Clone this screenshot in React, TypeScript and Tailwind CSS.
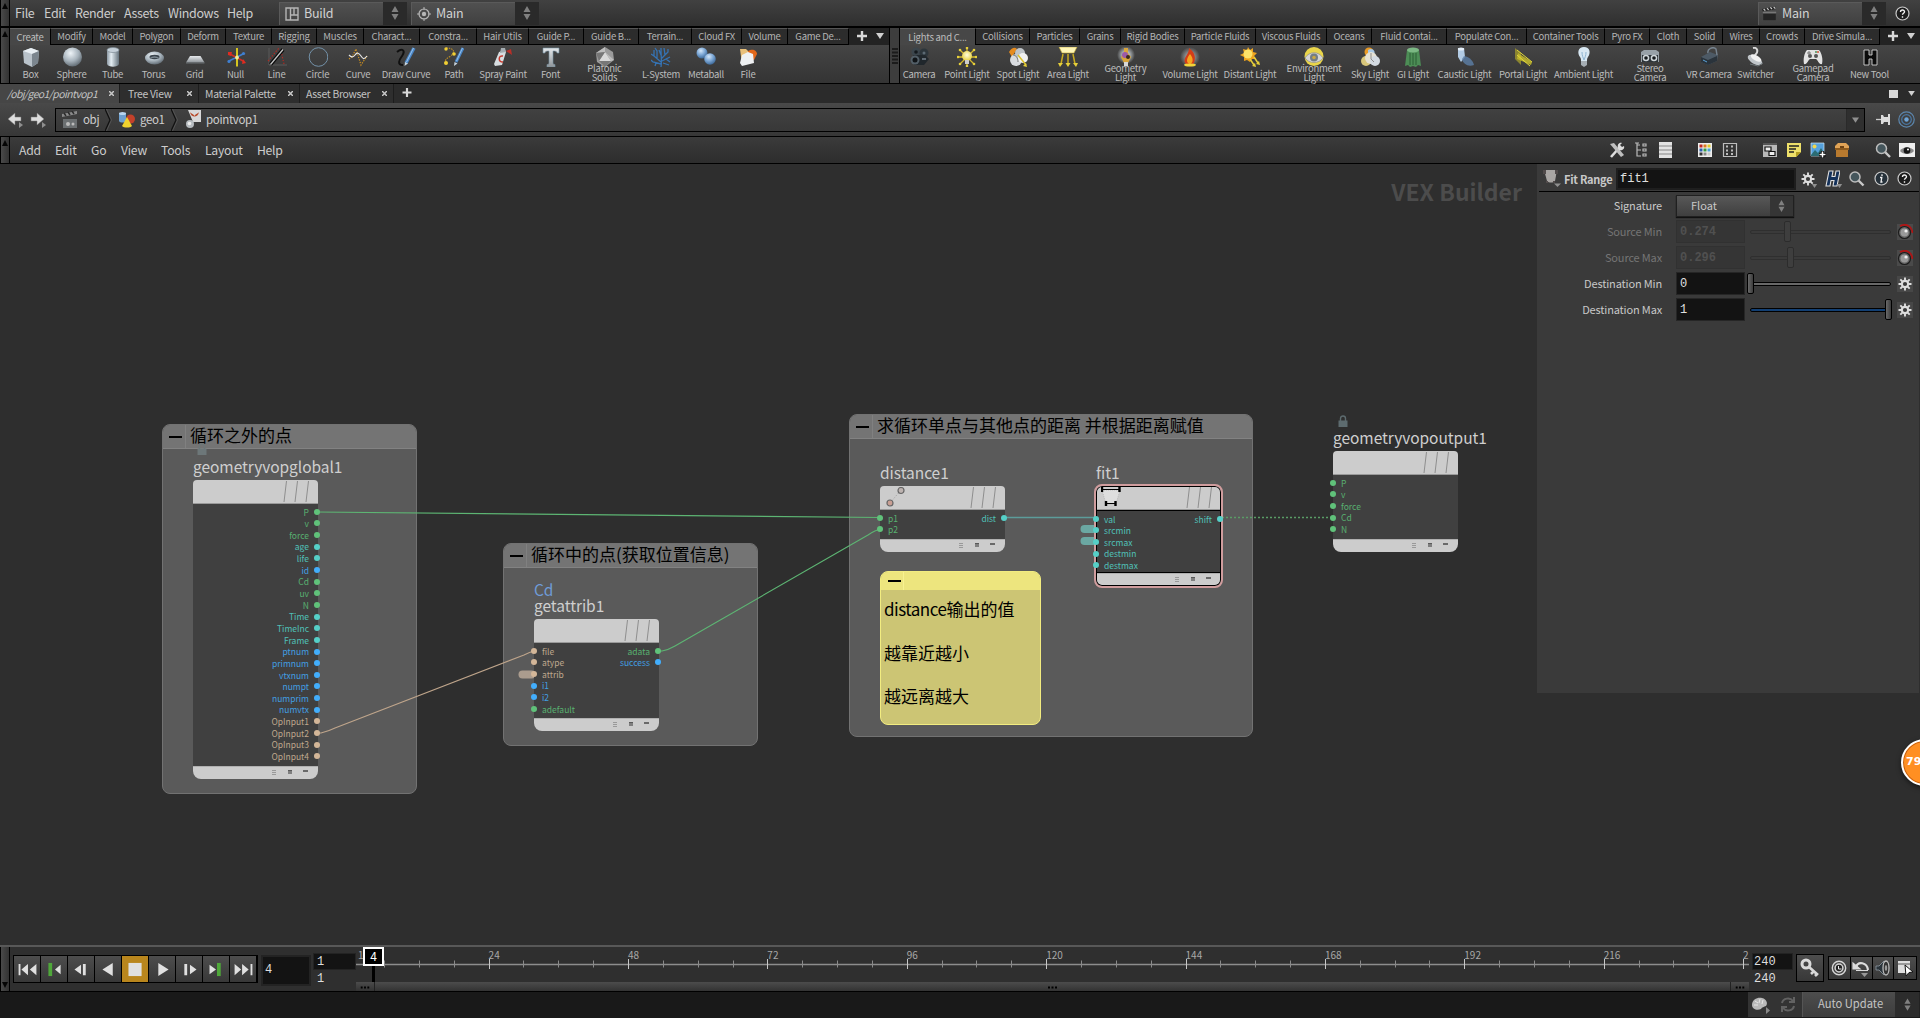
import React from "react";

/* ---------- shelf icons, 20 x 20 ---------- */
const Defs = () => (
  <svg className="absolute h-0 w-0" aria-hidden="true">
    <defs>
      <radialGradient id="ball" cx="0.4" cy="0.3" r="0.75"><stop offset="0" stopColor="#eef4f8" /><stop offset="0.55" stopColor="#a8b4bd" /><stop offset="1" stopColor="#59636b" /></radialGradient>
      <radialGradient id="blueBall" cx="0.4" cy="0.3" r="0.75"><stop offset="0" stopColor="#d5e8fa" /><stop offset="0.5" stopColor="#7ba6d4" /><stop offset="1" stopColor="#34608f" /></radialGradient>
      <linearGradient id="tube" x1="0" x2="1" y1="0" y2="0"><stop offset="0" stopColor="#8b98a3" /><stop offset="0.35" stopColor="#e4edf3" /><stop offset="1" stopColor="#65727c" /></linearGradient>
      <linearGradient id="steel" x1="0" x2="0" y1="0" y2="1"><stop offset="0" stopColor="#e6e9ec" /><stop offset="1" stopColor="#8e9499" /></linearGradient>
      <radialGradient id="glow" cx="0.5" cy="0.4" r="0.6"><stop offset="0" stopColor="#fffde0" /><stop offset="1" stopColor="#e6cf3a" /></radialGradient>
      <radialGradient id="halo" cx="0.5" cy="0.5" r="0.5"><stop offset="0.4" stopColor="#b9c0c4" stopOpacity="0.9" /><stop offset="1" stopColor="#b9c0c4" stopOpacity="0" /></radialGradient>
    </defs>
  </svg>
);

const art: Record<string, React.ReactNode> = {
  box: <><path d="M2 4 10 1l8 3-1 12-6 4-8-4z" fill="#b9c2ca" /><path d="M2 4 10 1l8 3-7 3z" fill="#e8eef3" /><path d="m11 7 7-3-1 12-6 4z" fill="#7b858e" /></>,
  sphere: <circle cx="10.5" cy="10" r="9.5" fill="url(#ball)" />,
  tube: <><path d="M4 3v14c1 3.500 11 3.500 12 0V3z" fill="url(#tube)" /><ellipse cx="10" cy="3" rx="6" ry="2.500" fill="#c5d0d9" stroke="#7e8b95" strokeWidth="0.700" /></>,
  torus: <><ellipse cx="10.500" cy="11" rx="9.500" ry="6.500" fill="url(#ball)" /><ellipse cx="10.500" cy="10" rx="5" ry="2.200" fill="#3b444c" /><path d="M6 11.500c3-2 6-2 9 0" stroke="#7d8992" fill="none" strokeWidth="1.500" /></>,
  grid: <><path d="M5 9h10.500L19.500 15.500H1z" fill="url(#steel)" /><path d="M1 15.500h18.500v1H1z" fill="#6b7074" /></>,
  nul: <><path d="m2 14.500 16-8" stroke="#3f7fd0" strokeWidth="1.600" /><path d="m3 6.500 15 8" stroke="#cf2f24" strokeWidth="1.600" /><path d="M11 1v18.500" stroke="#d6c51f" strokeWidth="2" /><path d="M2 5h4l-1 4-3-1zM17 12l3 4-4 1z" fill="#e02b20" /><circle cx="17.500" cy="6.500" r="1.600" fill="#3f7fd0" /><circle cx="3" cy="14.500" r="1.600" fill="#3f7fd0" /><circle cx="11" cy="10.500" r="1.900" fill="#f3ee9a" /></>,
  line: <><path d="M2 1v17h18" stroke="#5a5a5a" fill="none" strokeWidth="1" /><path d="M1 14 12 1M14 4l3 13" stroke="#b02b22" strokeWidth="1.200" strokeDasharray="1.500 1.500" /><path d="M3.500 17.500 16 2.500" stroke="#090909" strokeWidth="3.800" /><path d="M3.500 17.500 16 2.500" stroke="#c4c4c4" strokeWidth="1.300" /></>,
  circle: <circle cx="10.500" cy="10" r="9.300" fill="none" stroke="#7391a8" strokeWidth="1" />,
  curve: <><path d="m1 12 3-2 4-8 5 16 6-9" stroke="#d1921e" fill="none" strokeWidth="1.200" strokeDasharray="1.300 1.300" /><path d="M1 8c2 2 4 3 6 0s4-2 6 1 3 4 6 0" stroke="#e5e5e5" fill="none" strokeWidth="1.200" /></>,
  draw: <><path d="M1 5c5-4 9-2 5 4-3 4-5 9 1 9" stroke="#101010" fill="none" strokeWidth="2" /><path d="m18 1-8 15" stroke="#4a86c6" strokeWidth="3.400" /><path d="m17.500 1-7 14" stroke="#9cc5ee" strokeWidth="1" /><path d="m8.500 19 .5-4 3 1.500z" fill="#c7d4de" /></>,
  path: <><path d="M2 1c9 0 10 5 3 9-4 2-4 5-3 6" stroke="#bd8f25" fill="none" strokeDasharray="1.500 1" strokeWidth="1.200" /><circle cx="2" cy="2" r="1.700" fill="#f1cf33" /><circle cx="10" cy="7" r="1.800" fill="#f1cf33" /><circle cx="2" cy="16" r="2" fill="#f1cf33" /><path d="m19 1-7 14" stroke="#4a86c6" strokeWidth="3" /><path d="m18.500 1-6 13" stroke="#9cc5ee" strokeWidth="0.900" /><path d="m10 19 .5-4 3 1.500z" fill="#c7d4de" /></>,
  spray: <><path d="m6 5 6-2 1 2-4 13-7 1-1-2z" fill="#d7dde0" /><path d="m8 1 4 0 1 4-6 1z" fill="#a4acb1" /><path d="M13 4l5-2 1 6z" fill="#cf2b23" opacity="0.850" /><path d="M10 9c-5-1-5 6 0 6" stroke="#c8392e" fill="none" strokeWidth="1.500" /></>,
  font: <path d="M2 1h16v5h-2c0-1.500-1-2-4-2v12c0 1 1 1.500 2 1.500V20H6v-2.500c1 0 2-.5 2-1.500V4c-3 0-4 .5-4 2H2z" fill="url(#steel)" stroke="#7794a6" strokeWidth="0.600" />,
  platonic: <><path d="m10 0 8 5 1 8-9 7-8-5-1-9z" fill="#9b9b9b" /><path d="m10 5-6 9 12 0z" fill="#d9d9d9" /><path d="m10 0 0 5-9 1zM19 13l-3 1-6-9z" fill="#bdbdbd" /><path d="M4 14 1 6l9-1zM16 14l-6 6-6-6z" fill="#777" /></>,
  lsys: <g stroke="#3573b4" fill="none" strokeWidth="1.300"><path d="M10 20c1-6 0-8 0-19M10 15 3 9V3M10 12l7-7V2M3 9 0 7M6 11 6 4 4 1M14 8 13 1M11 14l8-4M10 17l-8-2-2-2M12 16l6 2M15 12l4 3M10 8 8 3M5 16l-1 3" /></g>,
  meta: <><circle cx="6" cy="6" r="5.500" fill="url(#blueBall)" /><circle cx="14" cy="12" r="5.800" fill="url(#blueBall)" /></>,
  file: <><path d="m2 2 6 0 2 2 6 0v6L4 17z" fill="#e9c07a" /><path d="M10 4c5-3 9 0 9 3l-3 6-5-2z" fill="#e2671a" /><path d="m4 8 6-3 5 2 1 9-12 3-2-3z" fill="#eef0f2" /></>,
  camera: <><circle cx="7" cy="5" r="4.500" fill="#3b454c" /><circle cx="15" cy="6" r="4.500" fill="#2c353b" /><path d="M4 8h12l4 4-5 6H5z" fill="#20272c" /><circle cx="6" cy="13" r="4.500" fill="#525e67" /><circle cx="6" cy="13" r="2.500" fill="#101417" /><circle cx="7" cy="5" r="1.800" fill="#14191d" /><circle cx="15" cy="6" r="1.500" fill="#5c6a74" /><path d="M13 12h4" stroke="#77858f" strokeWidth="1.500" /></>,
  point: <><g stroke="#d5b92c" strokeWidth="1.300"><path d="M10 0v20M0 10h20M3 3l14 14M17 3 3 17" /></g><g fill="#e6cf3a"><circle cx="10" cy="1" r="1.300" /><circle cx="10" cy="19" r="1.300" /><circle cx="1" cy="10" r="1.300" /><circle cx="19" cy="10" r="1.300" /><circle cx="3" cy="3" r="1.300" /><circle cx="17" cy="3" r="1.300" /><circle cx="3" cy="17" r="1.300" /><circle cx="17" cy="17" r="1.300" /></g><circle cx="10" cy="9" r="5" fill="url(#glow)" /><path d="M8 13h4v4H8z" fill="#ccc" /></>,
  spot: <><path d="M1 5c3-5 6-5 8-3L4 10z" fill="#e68b1e" /><circle cx="8" cy="13" r="6" fill="#d9dcdf" /><circle cx="12" cy="6" r="5" fill="#bfc4c8" /><circle cx="15" cy="11" r="5" fill="#f0f0f0" /><path d="M5 8c3 0 5 3 5 7" stroke="#777" fill="none" /><path d="m10 8 8 10" stroke="#d9bf2b" strokeWidth="1.500" /><path d="m19 20-4-1 3-3z" fill="#e6cf3a" /></>,
  area: <><path d="M1 0h18l-3 6H4z" fill="#fff6b8" stroke="#c4a72d" strokeWidth="0.600" /><path d="M5 7 3 17M10 7v11M15 7l2 10" stroke="#c9ab1f" strokeWidth="1.500" /><path d="m0 16 5 0-3 4zM7.500 16h5L10 20zM15 16h5l-2 4z" fill="#e6cf3a" /></>,
  geo: <><circle cx="10" cy="8" r="9" fill="url(#halo)" /><path d="M8 1h4v5l3 4-3 6H8l-3-6 3-4z" fill="#d9a53b" /><circle cx="9" cy="8" r="3" fill="#9c5aa8" /><circle cx="12" cy="10" r="2" fill="#3a2a1c" /><path d="M8 15h4v4H8z" fill="#d8d8d8" /></>,
  fire: <><circle cx="10" cy="10" r="10" fill="url(#halo)" opacity="0.700" /><path d="M9 1c6 5 7 9 5 15-2 2-7 2-9 0-2-6 4-8 4-15z" fill="#d43d18" /><path d="M10 7c4 5 3 9 0 10-4-1-4-5 0-10z" fill="#f7a51f" /><ellipse cx="10" cy="18" rx="6" ry="1.600" fill="#f1d43a" /></>,
  distant: <><path d="m8 0 2 3 3-2 0 4 4 1-3 3 2 3-4 0-2 3-3-2-3 1 0-4-4-2 4-2-1-4 4 1z" fill="#eda41e" /><circle cx="8" cy="7" r="4.500" fill="#fce36a" /><path d="m10 12 4 6M14 10l4 6" stroke="#e6cf3a" strokeWidth="1.500" /><path d="m16 20-4-1 3-3zM20 18l-4-1 3-3z" fill="#e6cf3a" /></>,
  env: <><circle cx="10" cy="9.500" r="9.500" fill="#e9d54a" /><path d="M1 11c4-7 14-7 18 0-4 6-14 6-18 0z" fill="#d5d5d5" stroke="#8c8c8c" strokeWidth="0.700" /><circle cx="10" cy="10.500" r="4" fill="#737d86" /><circle cx="10" cy="10.500" r="1.800" fill="#c9a845" /></>,
  sky: <><circle cx="9" cy="5" r="4.500" fill="#e99a25" /><path d="M8 3c5-3 8 2 6 5l-6 1z" fill="#a8c8e5" /><circle cx="6" cy="14" r="5" fill="#d9c77b" /><circle cx="11" cy="11" r="6" fill="#e6e2d4" /><circle cx="15" cy="14" r="5" fill="#d4dbe2" /><path d="m11 6 0 6 3 3" stroke="#8d8d8d" fill="none" /></>,
  gi: <><path d="M4 3h12l2 16-3-1-2 2-3-1-3 1-2-2-3 1z" fill="#4d8d56" /><ellipse cx="10" cy="3" rx="6" ry="2.500" fill="#7cb884" /><path d="M7 6v12M10 6v12M13 6v12" stroke="#2c5e35" strokeWidth="1" /></>,
  caustic: <><path d="M3 1h6l1 9-4 5-3-5z" fill="#b2cbe4" /><ellipse cx="6" cy="2" rx="3.200" ry="1.500" fill="#e6f0fa" /><path d="M9 9c6 1 9 5 10 9-6 2-11-1-12-6z" fill="#5c7fa8" opacity="0.800" /></>,
  portal: <><path d="m2 1 6 5 0 12-6-6z" fill="#8b8530" /><path d="m5 6 14 9-1 3L4 12z" fill="#c5bb2b" opacity="0.850" /><path d="m4 3 15 12M4 8l13 11" stroke="#e3d93b" strokeWidth="1" /></>,
  bulb: <><path d="M10 0c6 0 7 6 4 10-1 1-1 3-1 4H7c0-1 0-3-1-4C3 6 4 0 10 0z" fill="#d7e7f2" /><path d="M7 14h6v4l-3 2-3-2z" fill="#a6aeb4" /><path d="M8 5c0 4 1 5 2 8 1-3 2-4 2-8" stroke="#8eb4d1" fill="none" /></>,
  stereo: <><path d="M1 5 4 3h12l3 2v10H1z" fill="#98a1a8" /><path d="M2 8h16v7H2z" fill="#2c3338" /><circle cx="6" cy="11" r="3.300" fill="#cfd6da" /><circle cx="6" cy="11" r="1.800" fill="#15191c" /><circle cx="14" cy="11" r="3.300" fill="#cfd6da" /><circle cx="14" cy="11" r="1.800" fill="#15191c" /></>,
  vr: <><path d="m2 10 9-5 8 3-1 6-9 4-7-3z" fill="#4d5a66" /><path d="m2 10 7 3 9-4v5l-9 4-7-3z" fill="#2a333b" /><path d="M9 6c-1-4 5-7 8-4l1 6" stroke="#76838f" fill="none" strokeWidth="1.500" /><path d="m4 13 4 2" stroke="#5ba3d9" /></>,
  switcher: <><path d="M7 1c5-1 5 4 3 6L6 12" stroke="#d9d9d9" fill="none" strokeWidth="2" /><ellipse cx="9" cy="13" rx="8" ry="4" fill="#bfc4c8" transform="rotate(30 9 13)" /><ellipse cx="10" cy="11" rx="6" ry="2.500" fill="#f1f1f1" transform="rotate(30 10 11)" /><path d="m4 17 8 2 5-3" stroke="#6d7478" fill="none" /></>,
  gamepad: <><path d="M4 3h12c3 3 4 10 3 14-3 1-4-4-6-5H7c-2 1-3 6-6 5C0 13 1 6 4 3z" fill="#e2e2e2" /><circle cx="7" cy="9" r="2" fill="#555" /><circle cx="13" cy="9" r="2" fill="#555" /><circle cx="15" cy="5" r="1" fill="#d2543a" /><circle cx="13" cy="5" r="0.900" fill="#3c8c4d" /><path d="M4 6h4M6 4v4" stroke="#777" /></>,
  newtool: <path d="M4 3h5v5h3V3h5v15h-5v-6H9v6H4z" fill="#0b0b0b" stroke="#d0d0d0" strokeWidth="0.900" />,
};

const Art = ({ n }: { n: string }) => (
  <svg className="h-5 w-5 shrink-0" viewBox="0 0 20 20">{art[n]}</svg>
);

/* ---------- small shared pieces ---------- */
const UpDown = ({ className = "" }: { className?: string }) => (
  <svg className={"h-[14px] w-[8px] shrink-0 " + className} viewBox="0 0 8 14"><path d="M4 0 7.500 6h-7zM4 14 .5 8h7z" fill="#808080" /></svg>
);
const Down = ({ className = "" }: { className?: string }) => (
  <svg className={"h-[6px] w-[8px] shrink-0 " + className} viewBox="0 0 8 6"><path d="M0 0h8L4 6z" fill="currentColor" /></svg>
);
const Plus = ({ className = "" }: { className?: string }) => (
  <svg className={"h-[10px] w-[10px] shrink-0 " + className} viewBox="0 0 10 10"><path d="M5 0v10M0 5h10" stroke="#d8d8d8" strokeWidth="2.400" /></svg>
);
const Grip = ({ up = true, className = "" }: { up?: boolean; className?: string }) => (
  <div className={"flex w-[10px] shrink-0 justify-center border-r border-l border-black bg-linear-to-r from-[#4a4a4a] to-[#333] " + (up ? "items-start pt-[3px] " : "items-end pb-[3px] ") + className}>
    <svg className="h-[6px] w-[6px]" viewBox="0 0 6 6"><path d={up ? "M3 0 6 6H0z" : "M3 6 0 0h6z"} fill="#050505" /></svg>
  </div>
);
const Help = () => (
  <svg className="h-[15px] w-[15px] shrink-0" viewBox="0 0 15 15"><circle cx="7.500" cy="7.500" r="6.500" fill="#1c1c1c" stroke="#c9c9c9" strokeWidth="1.200" /><path d="M5.500 6c0-2.600 4-2.600 4-.2 0 1.500-2 1.500-2 3M7.500 10.200v1.500" stroke="#f2f2f2" strokeWidth="1.400" fill="none" /></svg>
);
const Info = () => (
  <svg className="h-[15px] w-[15px] shrink-0" viewBox="0 0 15 15"><circle cx="7.500" cy="7.500" r="6.500" fill="#26313a" stroke="#c9c9c9" strokeWidth="1.200" /><path d="M6 6.500h1.800L7 11h1.500M8 3.300v1.600" stroke="#f2f2f2" strokeWidth="1.300" fill="none" /></svg>
);
const Search = () => (
  <svg className="h-[17px] w-[17px] shrink-0" viewBox="0 0 17 17"><path d="m10 10 5.500 5.500" stroke="#c9c9c9" strokeWidth="2.400" /><circle cx="7" cy="7" r="5" fill="#45565c" stroke="#bcbcbc" strokeWidth="1.500" /></svg>
);
const Gear = ({ className = "h-[16px] w-[16px]" }: { className?: string }) => (
  <svg className={"shrink-0 " + className} viewBox="0 0 16 16"><g stroke="#dedede" strokeWidth="1.900"><path d="M8 1.500v13M1.500 8h13M3.300 3.300l9.400 9.400M12.700 3.300l-9.400 9.400" /></g><circle cx="8" cy="8" r="4.200" fill="#dedede" /><circle cx="8" cy="8" r="2.100" fill="#3a3a3a" /></svg>
);
const Clapper = ({ className }: { className: string }) => (
  <svg className={"shrink-0 " + className} viewBox="0 0 18 18"><path d="M1 8h16v9H1z" fill="#242424" stroke="#555" strokeWidth="0.600" /><path d="m0 3 16-3 .6 3L1 6z" fill="#222" /><path d="m2 3 2 2M6 2l2 2M10 1l2 2M14 .5l2 2" stroke="#ccc" strokeWidth="1.500" /><path d="M1 6.200h16v2H1z" fill="#777" /></svg>
);

/* ---------- top menu ---------- */
const Picker = ({ icon, label, widths }: { icon: React.ReactNode; label: string; widths: string }) => (
  <div className="flex h-[23px]">
    <div className={"flex items-center border-t border-l border-[#5a5a5a] bg-linear-to-b from-[#505050] to-[#404040] text-[#d2d2d2] " + widths}>
      {icon}<span className="ml-[5px] text-[12.500px] tracking-[-0.250px]">{label}</span>
    </div>
    <div className="flex w-6 items-center justify-center bg-[#2a2a2a]"><UpDown /></div>
  </div>
);

const menus = [["File", "w-[29px]"], ["Edit", "w-[31px]"], ["Render", "w-[49px]"], ["Assets", "w-[44px]"], ["Windows", "w-[59px]"], ["Help", "w-[52px]"]];

const TopBar = () => (
  <div className="flex h-[27px] border-b border-black bg-linear-to-b from-[#414141] to-[#2f2f2f]">
    <Grip />
    <div className="flex items-center pl-[5px] text-[12.500px] tracking-[-0.350px] text-[#cdcdcd]">
      {menus.map(([m, w]) => <span key={m} className={w}>{m}</span>)}
    </div>
    <div className="flex items-center gap-1">
      <Picker label="Build" widths="w-[104px] pl-[5px]" icon={<svg className="h-[14px] w-[14px]" viewBox="0 0 14 14"><path d="M1 1h12v12H1zM5.500 1v12M5.500 8H13M9 8V1" stroke="#b5b5b5" strokeWidth="1.400" fill="none" /></svg>} />
      <Picker label="Main" widths="w-[104px] pl-[5px]" icon={<svg className="h-[14px] w-[14px]" viewBox="0 0 14 14"><circle cx="7" cy="7" r="5" stroke="#b5b5b5" strokeWidth="1.200" fill="none" /><circle cx="7" cy="7" r="2.200" fill="#b5b5b5" /><path d="M7 0v3M7 11v3M0 7h3M11 7h3" stroke="#b5b5b5" /></svg>} />
    </div>
    <div className="ml-auto flex items-center">
      <Picker label="Main" widths="w-[104px] pl-[3px]" icon={<Clapper className="h-[16px] w-[15px]" />} />
      <div className="ml-[9px] mr-[10px]"><Help /></div>
    </div>
  </div>
);

/* ---------- shelves ---------- */
type Pair = [string, string];
const leftTabs: Pair[] = [["Create", "w-[41px]"], ["Modify", "w-[42px]"], ["Model", "w-[40px]"], ["Polygon", "w-[48px]"], ["Deform", "w-[45px]"], ["Texture", "w-[46px]"], ["Rigging", "w-[45px]"], ["Muscles", "w-[47px]"], ["Charact...", "w-[56px]"], ["Constra...", "w-[57px]"], ["Hair Utils", "w-[52px]"], ["Guide P...", "w-[55px]"], ["Guide B...", "w-[55px]"], ["Terrain...", "w-[53px]"], ["Cloud FX", "w-[50px]"], ["Volume", "w-[46px]"], ["Game De...", "w-[61px]"]];
const rightTabs: Pair[] = [["Lights and C...", "w-[76px]"], ["Collisions", "w-[54px]"], ["Particles", "w-[50px]"], ["Grains", "w-[41px]"], ["Rigid Bodies", "w-[64px]"], ["Particle Fluids", "w-[71px]"], ["Viscous Fluids", "w-[71px]"], ["Oceans", "w-[45px]"], ["Fluid Contai...", "w-[75px]"], ["Populate Con...", "w-[80px]"], ["Container Tools", "w-[78px]"], ["Pyro FX", "w-[45px]"], ["Cloth", "w-[37px]"], ["Solid", "w-[36px]"], ["Wires", "w-[37px]"], ["Crowds", "w-[45px]"], ["Drive Simula...", "w-[75px]"]];
type Tool = [string, string, string];
const leftTools: Tool[] = [["Box", "box", "w-[41px]"], ["Sphere", "sphere", "w-[41px]"], ["Tube", "tube", "w-[41px]"], ["Torus", "torus", "w-[41px]"], ["Grid", "grid", "w-[41px]"], ["Null", "nul", "w-[41px]"], ["Line", "line", "w-[41px]"], ["Circle", "circle", "w-[41px]"], ["Curve", "curve", "w-[40px]"], ["Draw Curve", "draw", "w-[56px]"], ["Path", "path", "w-[40px]"], ["Spray Paint", "spray", "w-[58px]"], ["Font", "font", "w-[37px]"], ["Platonic\nSolids", "platonic", "w-[71px]"], ["L-System", "lsys", "w-[42px]"], ["Metaball", "meta", "w-[48px]"], ["File", "file", "w-[36px]"]];
const rightTools: Tool[] = [["Camera", "camera", "w-[38px]"], ["Point Light", "point", "w-[58px]"], ["Spot Light", "spot", "w-[44px]"], ["Area Light", "area", "w-[56px]"], ["Geometry\nLight", "geo", "w-[59px]"], ["Volume Light", "fire", "w-[70px]"], ["Distant Light", "distant", "w-[50px]"], ["Environment\nLight", "env", "w-[78px]"], ["Sky Light", "sky", "w-[34px]"], ["GI Light", "gi", "w-[52px]"], ["Caustic Light", "caustic", "w-[51px]"], ["Portal Light", "portal", "w-[66px]"], ["Ambient Light", "bulb", "w-[55px]"], ["Stereo\nCamera", "stereo", "w-[78px]"], ["VR Camera", "vr", "w-[40px]"], ["Switcher", "switcher", "w-[53px]"], ["Gamepad\nCamera", "gamepad", "w-[62px]"], ["New Tool", "newtool", "w-[51px]"]];

const Shelf = ({ tabs, tools, className }: { tabs: Pair[]; tools: Tool[]; className: string }) => (
  <div className={"flex flex-col " + className}>
    <div className="flex h-[17px] bg-[#232323]">
      {tabs.map(([t, w], i) => (
        <div key={t} className={"flex items-center justify-center overflow-hidden border-t border-r border-r-black text-[9.500px] tracking-[-0.250px] whitespace-nowrap " + w + (i === 0 ? " border-t-[#606060] bg-[#474747] text-[#bdbdbd]" : " border-b border-b-black border-t-[#555] bg-[#2c2c2c] text-[#b4b4b4]")}>{t}</div>
      ))}
      <Plus className="mt-[3px] ml-[8px]" />
      <Down className="mt-[5px] ml-[9px] text-[#d0d0d0]" />
    </div>
    <div className="flex h-[38px] bg-linear-to-b from-[#454545] to-[#343434]">
      {tools.map(([t, icon, w]) => (
        <div key={t} className={"flex flex-col items-center pt-[2px] " + w}>
          <Art n={icon} />
          <span className={"text-center text-[9.500px] tracking-[-0.250px] whitespace-pre text-[#bcbcbc] " + (t.includes("\n") ? "-mt-[3px] leading-[9px]" : "mt-[1px] leading-[13px]")}>{t}</span>
        </div>
      ))}
    </div>
  </div>
);

const Shelves = () => (
  <div className="flex h-[57px] border-t border-b border-black bg-[#333]">
    <Grip />
    <Shelf tabs={leftTabs} tools={leftTools} className="w-[879px]" />
    <div className="grid w-[11px] place-items-center border-r border-l border-black bg-[#3d3d3d]">
      <svg className="h-[16px] w-[6px]" viewBox="0 0 6 16"><path d="M1 0v16M5 0v16M3 0v16" stroke="#0a0a0a" strokeDasharray="2 1.500" strokeWidth="1.300" /></svg>
    </div>
    <Shelf tabs={rightTabs} tools={rightTools} className="grow" />
  </div>
);

/* ---------- pane tabs and path ---------- */
const paneTabs: Pair[] = [["/obj/geo1/pointvop1", "w-[120px] pl-[7px] pr-[5px] bg-[#464646] italic tracking-[-0.550px]"], ["Tree View", "w-[79px] pl-[8px] pr-[6px] bg-[#2e2e2e] tracking-[-0.300px]"], ["Material Palette", "w-[101px] pl-[6px] pr-[6px] bg-[#2e2e2e] tracking-[-0.300px]"], ["Asset Browser", "w-[94px] pl-[6px] pr-[6px] bg-[#2e2e2e] tracking-[-0.300px]"]];

const PaneTabs = () => (
  <div className="flex h-[19px] items-stretch bg-[#2b2b2b]">
    {paneTabs.map(([t, c]) => (
      <div key={t} className={"flex items-center justify-between border-r border-[#1d1d1d] text-[10.400px] whitespace-nowrap text-[#c3c3c3] " + c}>
        <span>{t}</span>
        <svg className="h-[5px] w-[5px]" viewBox="0 0 5 5"><path d="m0 0 5 5M5 0 0 5" stroke="#c8c8c8" strokeWidth="1.500" /></svg>
      </div>
    ))}
    <Plus className="mt-[4px] ml-[8px] !h-[9px]" />
    <div className="mr-[5px] ml-auto flex items-center gap-[10px]">
      <span className="h-[8px] w-[9px] bg-[#dadada]" />
      <Down className="!h-[5px] !w-[7px] text-[#d0d0d0]" />
    </div>
  </div>
);

const NavArrow = ({ flip = false }: { flip?: boolean }) => (
  <svg className="h-[18px] w-[17px] shrink-0" viewBox="0 0 17 18"><path transform={flip ? "translate(15 0) scale(-1 1)" : undefined} d="m1 8 7-6v4h6v4H8v4z" fill="#dcdcdc" stroke="#777" strokeWidth="0.500" /><path d="m12 11 4 3-4 3z" fill="#8f8f8f" /></svg>
);
const Chevron = () => (
  <svg className="h-[22px] w-[7px] shrink-0" viewBox="0 0 7 22"><path d="M0 0 5 11 0 22" fill="none" stroke="#111" strokeWidth="1.200" /><path d="M1.500 0 6.500 11l-5 11" fill="none" stroke="#565656" strokeWidth="0.900" /></svg>
);

const PathBar = () => (
  <div className="flex h-[33px] items-center bg-linear-to-b from-[#494949] to-[#373737]">
    <div className="ml-[7px] flex w-[48px] gap-[6px]"><NavArrow /><NavArrow flip /></div>
    <div className="flex h-[24px] w-[1810px] items-center border border-black bg-linear-to-b from-[#414141] to-[#383838] text-[11.500px] tracking-[-0.350px] text-[#cfcfcf]">
      <svg className="ml-[5px] h-[17px] w-[17px]" viewBox="0 0 17 17"><path d="m1 3 15-3v3L1 6z" fill="#8a8a8a" /><path d="m3 2 2 3M7 1l2 3M11 0l2 3" stroke="#2c2c2c" strokeWidth="1.500" /><path d="M2 8h14v9H2z" fill="#6b6f71" /><circle cx="7" cy="13" r="2" fill="#bbb" /><circle cx="12" cy="13" r="1.500" fill="#bbb" /></svg>
      <span className="ml-[5px] w-[22px]">obj</span><Chevron />
      <svg className="ml-[6px] h-[17px] w-[17px]" viewBox="0 0 17 17"><path d="M1 2v8c1 2 6 2 7 0V2z" fill="#6ea0cf" /><ellipse cx="4.500" cy="2.500" rx="3.500" ry="1.500" fill="#b9d5ef" /><circle cx="12.500" cy="8" r="4.500" fill="#c3412a" /><path d="m9 6 5 9c-2 2-8 2-10 0z" fill="#f0d22e" /></svg>
      <span className="ml-[5px] w-[31px]">geo1</span><Chevron />
      <svg className="ml-[7px] h-[19px] w-[16px]" viewBox="0 0 16 19"><path d="M3 0h13v12H8z" fill="#d8d8d8" /><path d="M5 2c1 6 8 6 9 0-1 2-3 1-4.500 4C8 3 6 4 5 2z" fill="#b84a2a" /><circle cx="5" cy="14" r="4" fill="#b7bcc0" /><circle cx="4.500" cy="13.500" r="1.800" fill="#eee" /></svg>
      <span className="ml-[5px]">pointvop1</span>
      <div className="ml-auto grid h-full w-[18px] place-items-center border-l border-[#2a2a2a] bg-[#2f2f2f]"><Down className="!h-[6px] !w-[7px] text-[#909090]" /></div>
    </div>
    <svg className="ml-[11px] h-[13px] w-[15px]" viewBox="0 0 15 13"><path d="M0 6.500h5" stroke="#ccc" strokeWidth="1.300" /><path d="M5 2h2l1 2h4V1h2v11h-2V9H8l-1 2H5z" fill="#dcdcdc" /></svg>
    <svg className="ml-[7px] h-[17px] w-[17px]" viewBox="0 0 17 17"><circle cx="8.500" cy="8.500" r="7.700" fill="none" stroke="#5c86ad" strokeWidth="1.200" /><circle cx="8.500" cy="8.500" r="4.800" fill="none" stroke="#4a78a5" strokeWidth="1.200" /><circle cx="8.500" cy="8.500" r="2.200" fill="#6fa5d8" /></svg>
  </div>
);

/* ---------- network menu ---------- */
const netMenu: Pair[] = [["Add", "w-[36px]"], ["Edit", "w-[36px]"], ["Go", "w-[30px]"], ["View", "w-[40px]"], ["Tools", "w-[44px]"], ["Layout", "w-[52px]"], ["Help", "w-[40px]"]];
const netIcons: [string, React.ReactNode][] = [
  ["mr-[8px]", <><path d="m2 15 8-9" stroke="#ddd" strokeWidth="2.600" /><path d="M1 2l4-1 10 12-3 2z" fill="#bfbfbf" /><path d="M9 6c-1-3 1-6 4-5l-2 2 2 2 2-1c1 3-2 5-5 4z" fill="#ddd" /></>],
  ["mr-[8px]", <path d="M4 1v13h4M4 3h3M4 8h4M10 2h3v2h-3zM10 7h3v2h-3zM10 12h3v2h-3zM2 1h4" stroke="#bbb" strokeWidth="1.200" fill="none" />],
  ["mr-[24px]", <><path d="M2 0h13v16H2z" fill="#e2e2e2" /><path d="M2 4h13M2 8h13M2 12h13" stroke="#a5a5a5" strokeWidth="1.500" /></>],
  ["mr-[9px]", <><path d="M1 1h14v14H1z" fill="#efefef" /><path d="M2.500 2.500h3v3h-3z" fill="#c02a22" /><path d="M6.500 2.500h3v3h-3z" fill="#dd7a1d" /><path d="M10.500 2.500h3v3h-3z" fill="#e1c92a" /><path d="M2.500 6.500h3v3h-3z" fill="#2a5fae" /><path d="M6.500 6.500h3v3h-3z" fill="#3a9a41" /><path d="M10.500 6.500h3v3h-3z" fill="#4aa3d6" /><path d="M2.500 10.500h3v3h-3z" fill="#333" /><path d="M6.500 10.500h3v3h-3z" fill="#888" /><path d="M10.500 10.500h3v3h-3z" fill="#c9c9c9" /></>],
  ["mr-[24px]", <><path d="M1.500 1.500h13v13h-13z" stroke="#bdbdbd" fill="none" strokeWidth="1.200" /><path d="M4 4.500h3M9 4.500h3M4 8.500h3M9 8.500h3M4 12h3M9 12h3" stroke="#bdbdbd" strokeWidth="2" strokeDasharray="2 1" /></>],
  ["mr-[8px]", <><path d="M1 2h14v13H1z" fill="#b9b9b9" /><path d="M1 1h14v2H1z" fill="#555" /><path d="M3 5h6v4H3zM7 9.500h6v4H7z" fill="#eee" stroke="#111" strokeWidth="1.200" /></>],
  ["mr-[8px]", <><path d="M1 1h14v9l-5 5H1z" fill="#eee06a" /><path d="M15 10h-5v5z" fill="#b59f20" /><path d="M3 4h10M3 7h7M3 10h5" stroke="#222" strokeWidth="1.400" /></>],
  ["mr-[8px]", <><path d="M1 1h13v13H1z" fill="#56a1dc" stroke="#cfe5f5" strokeWidth="0.700" /><path d="m1 13 4-5 3 3 3-5 3 5v3H1z" fill="#2b6c74" /><circle cx="4.500" cy="4.500" r="2" fill="#f0d54d" /><path d="M12.500 9v7M9 12.500h7" stroke="#000" strokeWidth="3.400" /><path d="M12.500 9.500v6M9.500 12.500h6" stroke="#fff" strokeWidth="1.600" /></>],
  ["mr-[25px]", <><path d="m1 4 3-3h8l3 3v3H1z" fill="#e0a356" /><path d="M2 7h12v8H2z" fill="#b87a2f" /><path d="M1 6h14v2H1z" fill="#8d5a1c" /><path d="M6 4h4v2H6z" fill="#6e4212" /></>],
  ["mr-[8px]", <><path d="m10 10 5 5" stroke="#c9c9c9" strokeWidth="2.400" /><circle cx="6.500" cy="6.500" r="5" fill="#45565c" stroke="#bcbcbc" strokeWidth="1.500" /></>],
  ["mr-[5px]", <><path d="M0 1h16v14H0z" fill="#efefef" /><path d="M1 9c3-5 11-5 14 0-3 4-11 4-14 0z" fill="#888" /><circle cx="8" cy="8.500" r="3.300" fill="#151515" /><circle cx="9" cy="7.500" r="1" fill="#fff" /></>],
];

const NetworkMenu = () => (
  <div className="flex h-[28px] border-t border-b border-black bg-linear-to-b from-[#3b3b3b] to-[#2d2d2d]">
    <Grip />
    <div className="flex items-center pl-[9px] text-[12.200px] tracking-[-0.250px] text-[#cdcdcd]">{netMenu.map(([m, w]) => <span key={m} className={w}>{m}</span>)}</div>
    <div className="ml-auto flex items-center">
      {netIcons.map(([c, el], i) => <svg key={i} className={"h-4 w-4 " + c} viewBox="0 0 16 16">{el}</svg>)}
    </div>
  </div>
);

/* ---------- network canvas ---------- */
type Kind = "g" | "t" | "b" | "n";
const dotColor: Record<Kind, string> = { g: "bg-[#60c27a]", t: "bg-[#55d0c8]", b: "bg-[#42aefc]", n: "bg-[#d3b698]" };
const textColor: Record<Kind, string> = { g: "text-[#58b070]", t: "text-[#50c0b8]", b: "text-[#429fe2]", n: "text-[#bfa78d]" };
type Port = [string, Kind];

const Frame = ({ title, x, y, w, h }: { title: string; x: number; y: number; w: number; h: number }) => (
  <div className="absolute overflow-hidden rounded-lg border border-[#727272] bg-[#5a5a5a]" style={{ left: x, top: y, width: w, height: h }}>
    <div className="flex h-[24px] border-b border-[#828282] bg-[#747474]">
      <div className="grid w-[23px] place-items-center border-r border-[#808080] pl-[3px]"><span className="h-[2px] w-[13px] bg-black" /></div>
      <span className="pl-[4px] text-[17px] leading-[19px] whitespace-nowrap text-black">{title}</span>
    </div>
  </div>
);

const Lock = ({ x, y, dim = false }: { x: number; y: number; dim?: boolean }) => (
  <svg className={"absolute h-[12px] w-[10px] " + (dim ? "text-[#6d7779]" : "text-[#5d6b6f]")} style={{ left: x, top: y }} viewBox="0 0 10 12"><path d="M2.500 6V3.500c0-3.300 5-3.300 5 0V6" stroke="currentColor" strokeWidth="1.400" fill="none" /><path d="M.5 5.500h9V12h-9z" fill="currentColor" /></svg>
);

const Ports = ({ ports, side }: { ports: Port[]; side: "in" | "out" }) => (
  <div className={"absolute top-[2px] z-10 " + (side === "in" ? "-left-[3px]" : "-right-[2px]")}>
    {ports.map(([n, k]) => (
      <div key={n} className={"flex h-[11.650px] items-center gap-[5px] " + (side === "in" ? "" : "flex-row-reverse")}>
        <span className={"h-[6px] w-[6px] shrink-0 rounded-full " + dotColor[k]} />
        <span className={"text-[8.500px] leading-none " + textColor[k]}>{n}</span>
      </div>
    ))}
  </div>
);

type NodeProps = { name: string; tag?: string; x: number; y: number; body: number; ins?: Port[]; outs?: Port[]; badge?: React.ReactNode; selected?: boolean };
const OpNode = ({ name, tag, x, y, body, ins = [], outs = [], badge, selected }: NodeProps) => (
  <div className="absolute w-[125px]" style={{ left: x, top: y }}>
    <div className="absolute bottom-full left-0 mb-[6px] text-[15.500px] leading-[16px] tracking-[-0.050px] whitespace-nowrap text-[#cfcfcf]">
      {tag && <div className="leading-[16px] text-[#6f9bd6]">{tag}</div>}
      <div>{name}</div>
    </div>
    <div className="relative flex flex-col">
      <div className="flex h-[24px] justify-between rounded-t-[4px] border-b border-[#9a9a9a] bg-[#cccccc]">
        <div className="pl-[4px]">{badge}</div>
        <svg className="mr-[8px] h-[23px] w-[28px]" viewBox="0 0 28 23"><path d="M4.500 1 2 22M15.500 1 13 22M26.500 1 24 22" stroke="#8e8e8e" strokeWidth="1" /></svg>
      </div>
      <div className={"relative bg-[#404040] " + (selected ? "border-t border-b border-black" : "")} style={{ height: body }}>
        <Ports ports={ins} side="in" />
        <Ports ports={outs} side="out" />
      </div>
      <div className="flex h-[13px] items-start justify-end rounded-b-[8px] border-t border-[#b0b0b0] bg-[#cccccc] pt-[3px] pr-[9px]">
        <svg className="h-[6px] w-[38px]" viewBox="0 0 38 6"><path d="M1 .5h4M1 2.500h4M1 4.500h4" stroke="#999" /><path d="M17 .8h4M17 3h4" stroke="#333" strokeWidth="1.200" /><path d="M32 1h5" stroke="#333" strokeWidth="1.300" /></svg>
      </div>
      {selected && <div className="absolute -inset-[2px] rounded-[8px] border-2 border-[#cf9c9d] shadow-[inset_0_0_0_1px_#000]" />}
    </div>
  </div>
);

const globalOuts: Port[] = [["P", "g"], ["v", "g"], ["force", "g"], ["age", "t"], ["life", "t"], ["id", "b"], ["Cd", "g"], ["uv", "g"], ["N", "g"], ["Time", "t"], ["TimeInc", "t"], ["Frame", "t"], ["ptnum", "b"], ["primnum", "b"], ["vtxnum", "b"], ["numpt", "b"], ["numprim", "b"], ["numvtx", "b"], ["OpInput1", "n"], ["OpInput2", "n"], ["OpInput3", "n"], ["OpInput4", "n"]];

const Network = () => (
  <div className="relative h-[781px] shrink-0 overflow-hidden bg-[#2e2e2e]">
    <div className="absolute top-[12px] right-[398px] text-[23px] leading-[30px] font-bold text-[#4c4c4c]">VEX Builder</div>
    <Frame title="循环之外的点" x={162} y={260} w={255} h={370} />
    <Frame title="循环中的点(获取位置信息)" x={503} y={379} w={255} h={203} />
    <Frame title="求循环单点与其他点的距离 并根据距离赋值" x={849} y={250} w={404} h={323} />
    <Lock x={197} y={279} dim />
    <Lock x={1338} y={251} />
    <svg className="absolute inset-0 h-full w-full" fill="none">
      <path d="M317 348 881 353.500" stroke="#5db573" strokeWidth="1.100" />
      <path d="M317 569h4c4-1 8-2 14-5L524 491c4-2 6-3 10-4" stroke="#bfa58b" strokeWidth="1.100" />
      <path d="M657 487h5c5-1 8-2 13-5L868 371c6-4 8-5 13-6" stroke="#5db573" strokeWidth="1.100" />
      <path d="M1004 353.500h92" stroke="#5c9c9a" strokeWidth="1.300" />
      <path d="M1222 353.500h112" stroke="#5a9c66" strokeWidth="1.300" strokeDasharray="2 2" />
      <g strokeWidth="8" strokeLinecap="round"><path d="M522.500 510.500h9" stroke="#ab9c8e" /><path d="M1084.500 365h10M1084.500 377h10" stroke="#6ba8a3" /></g>
    </svg>
    <OpNode name="geometryvopglobal1" x={193} y={316} body={262} outs={globalOuts} />
    <OpNode name="getattrib1" tag="Cd" x={534} y={455} body={75} ins={[["file", "n"], ["atype", "n"], ["attrib", "n"], ["i1", "b"], ["i2", "b"], ["adefault", "g"]]} outs={[["adata", "g"], ["success", "b"]]} />
    <OpNode name="distance1" x={880} y={322} body={29} ins={[["p1", "g"], ["p2", "g"]]} outs={[["dist", "t"]]}
      badge={<svg className="mt-[1px] ml-[2px] h-[20px] w-[20px]" viewBox="0 0 20 20"><path d="m4 16 11-13" stroke="#aaa" strokeDasharray="1.500 1.500" /><circle cx="4" cy="16" r="3" fill="#c99f94" stroke="#666" strokeWidth="1.200" /><circle cx="15" cy="3.500" r="3" fill="#bdb3b0" stroke="#666" strokeWidth="1.200" /></svg>} />
    <OpNode name="fit1" x={1096} y={322} body={63} selected ins={[["val", "t"], ["srcmin", "t"], ["srcmax", "t"], ["destmin", "t"], ["destmax", "t"]]} outs={[["shift", "t"]]}
      badge={<svg className="mt-[1px] ml-[1px] h-[20px] w-[20px]" viewBox="0 0 20 20"><path d="M1 3h18l-4 14H5z" fill="#dedede" stroke="#999" strokeWidth="0.500" strokeDasharray="1 1" /><path d="M1 0v5M18.500 0v5M5 14v5M14.500 14v5" stroke="#000" strokeWidth="2.400" /><path d="M1 2.500h18M5 16.500h9" stroke="#000" /></svg>} />
    <OpNode name="geometryvopoutput1" x={1333} y={287} body={64} ins={[["P", "g"], ["v", "g"], ["force", "g"], ["Cd", "g"], ["N", "g"]]} />
    <div className="absolute top-[407px] left-[880px] h-[154px] w-[161px] overflow-hidden rounded-lg border border-[#f2ec80] bg-[#ccc574] text-[17px] leading-[43.500px] text-black">
      <div className="flex h-[18px] bg-[#ede57e]"><div className="grid w-[23px] place-items-center border-r border-[#f7f191] pl-[4px]"><span className="h-[2px] w-[13px] bg-black" /></div></div>
      <div className="-mt-[3px] pl-[3px]"><p><span className="tracking-[-0.500px]">distance</span>输出的值</p><p>越靠近越小</p><p>越远离越大</p></div>
    </div>
    <div className="absolute top-[575px] left-[1901px] flex h-[47px] w-[47px] items-center rounded-full border-2 border-white bg-[#ff8f22] pl-[3px] font-['DejaVu_Sans'] text-[11px] font-bold text-white shadow-[0_2px_5px_rgba(0,0,0,0.5),inset_0_0_0_1px_#c65f10]">79</div>
    <Params />
  </div>
);

/* ---------- parameter pane ---------- */
const Slider = ({ knob, off, fill }: { knob: string; off?: boolean; fill?: boolean }) => (
  <div className="relative ml-[5px] flex h-[22px] w-[141px] items-center">
    <span className={"h-[4px] w-full rounded-sm border " + (off ? "border-[#2f2f2f] bg-[#3a3a3a]" : fill ? "border-black bg-[#123f73]" : "border-black bg-[#686868]")} />
    <span className={"absolute h-[21px] w-[7px] rounded-[2px] border " + knob + (off ? " border-[#2c2c2c] bg-[#3e3e3e]" : " border-black bg-linear-to-r from-[#6a6a6a] to-[#3c3c3c]")} />
  </div>
);
const Knob = () => (
  <svg className="h-4 w-4 bg-[#4a4a4a]" viewBox="0 0 16 16"><circle cx="7.500" cy="8.500" r="6" fill="#666" stroke="#1c1c1c" strokeWidth="1.200" /><circle cx="7.500" cy="8.500" r="4" fill="#999" /><circle cx="9" cy="7" r="1.600" fill="#eee" /><path d="M3 2c6-3 12 0 12.500 7" stroke="#b01414" strokeWidth="1.700" fill="none" /></svg>
);
const rows: { label: string; value: string; off?: boolean; fill?: boolean; knob: string }[] = [
  { label: "Source Min", value: "0.274", off: true, knob: "left-[34px]" },
  { label: "Source Max", value: "0.296", off: true, knob: "left-[37px]" },
  { label: "Destination Min", value: "0", knob: "-left-[3px]" },
  { label: "Destination Max", value: "1", fill: true, knob: "left-[135px]" },
];

const Params = () => (
  <div className="absolute top-0 right-[1px] h-[529px] w-[382px] bg-[#3a3a3a] text-[#c8c8c8]">
    <div className="ml-[2px] flex h-[28px] items-end border-b border-black pb-[1px]">
      <svg className="mb-[3px] ml-[4px] h-[18px] w-[20px]" viewBox="0 0 20 18"><path d="M1 1h13l-2 11c-2 2-6 2-8 0z" fill="#a9a6a4" /><path d="M0 1h3v4H0zM12 1h3v4h-3zM3 12h2v2H3zM10 12h2v2h-2z" fill="#514b4b" /><path d="M11 14.500h7l-3.500 3.500z" fill="#8f8f8f" /></svg>
      <span className="ml-[1px] w-[51px] pb-[2px] text-[11px] leading-[17px] font-bold tracking-[-0.250px] whitespace-nowrap">Fit Range</span>
      <div className="ml-[1px] h-[22px] w-[180px] border-2 border-[#1e1e1e] bg-[#131313] pl-[2px] font-['Liberation_Mono'] text-[12px] leading-[18px] text-[#e0e0e0]">fit1</div>
      <div className="mb-[3px] ml-[4px] flex w-[112px] items-center justify-between">
        <div className="relative"><Gear /><Down className="absolute top-[13px] left-[11px] !h-[4px] !w-[7px] text-[#8f8f8f]" /></div>
        <div className="relative"><svg className="h-[17px] w-[15px]" viewBox="0 0 15 17"><path d="M4 1h4L7 6.500h3L11 1h4l-3 15H8l1-5.500H6L5 16H1z" fill="#14315a" stroke="#e0e0e0" strokeWidth="1.100" /></svg><Down className="absolute top-[14px] left-[11px] !h-[4px] !w-[7px] text-[#8f8f8f]" /></div>
        <Search /><Info /><Help />
      </div>
    </div>
    <div className="mt-[2px] flex h-[23px] items-center">
      <span className="w-[125px] text-right text-[11px] tracking-[-0.150px]">Signature</span>
      <div className="ml-[14px] flex h-[22px] w-[118px] border border-[#202020] bg-linear-to-b from-[#585858] to-[#3f3f3f] shadow-[0_1px_1px_#111]">
        <span className="w-[93px] pl-[14px] text-[11px] leading-[19px]">Float</span>
        <span className="flex grow items-center justify-center bg-[#353535]"><UpDown className="!h-[12px] !w-[7px]" /></span>
      </div>
    </div>
    <div className="mt-[3px] flex flex-col gap-[3px]">
      {rows.map((r) => (
        <div key={r.label} className="flex h-[23px] items-center">
          <span className={"w-[125px] text-right text-[11px] tracking-[-0.150px] " + (r.off ? "text-[#757575]" : "")}>{r.label}</span>
          <div className={"ml-[14px] h-[23px] w-[69px] border pl-[3px] font-['Liberation_Mono'] text-[12px] leading-[22px] " + (r.off ? "border-[#313131] bg-[#353535] font-bold text-[#505050]" : "border-[#262626] bg-[#131313] text-[#e0e0e0]")}>{r.value}</div>
          <Slider knob={r.knob} off={r.off} fill={r.fill} />
          <div className="ml-[6px] bg-[#474747]">{r.off ? <Knob /> : <Gear />}</div>
        </div>
      ))}
    </div>
  </div>
);

/* ---------- timeline ---------- */
const transport: React.ReactNode[] = [
  <path d="M1 2h2v12H1zM11 2v12L4 8zM20 2v12l-7-6z" />,
  <><path d="M4 1h4v14H4z" fill="#4fa83a" /><path d="M17 3v10l-6-5z" /></>,
  <path d="M10 3v10L3 8zM12 2h3v12h-3z" />,
  <path d="M15 1v14L4 8z" />,
  <path d="M3 1h14v14H3z" />,
  <path d="M6 1v14l11-7z" />,
  <path d="M5 2h3v12H5zM11 3v10l7-5z" />,
  <><path d="M3 3v10l7-5z" /><path d="M11 1h4v14h-4z" fill="#4fa83a" /></>,
  <path d="M1 2v12l7-6zM9 2v12l7-6zM18 2h2v12h-2z" />,
];
const pxPerFrame = 5.808;
const ticks = Array.from({ length: 40 }, (_, i) => (i + 1) * 6);
const Dots = ({ className = "" }: { className?: string }) => (
  <svg className={"h-[9px] w-[19px] " + className} viewBox="0 0 19 9"><path d="M5 5.500h10" stroke="#000" strokeWidth="2" strokeDasharray="2 1.500" /></svg>
);

const Timeline = () => (
  <div className="flex h-[47px] shrink-0 border-t-2 border-b border-t-[#585858] border-b-black bg-[#2f2f2f]">
    <Grip up={false} />
    <div className="mt-[8px] ml-[3px] flex h-[28px] border border-black">
      {transport.map((p, i) => (
        <div key={i} className={"grid w-[27px] place-items-center border-r border-black " + (i === 4 ? "bg-[#b9861d]" : "bg-linear-to-b from-[#4d4d4d] to-[#383838]")}>
          <svg className="h-[15px] w-[21px]" viewBox="0 0 21 16" fill="#e0e0e0">{p}</svg>
        </div>
      ))}
    </div>
    <div className="mt-[8px] ml-[3px] h-[31px] w-[50px] border-2 border-[#232323] bg-[#131313] pl-[2px] font-['Liberation_Mono'] text-[12px] leading-[27px] text-[#dedede]">4</div>
    <div className="mt-[6px] ml-[2px] w-[43px] font-['Liberation_Mono'] text-[12px] text-[#dedede]">
      <div className="h-[17px] border border-[#232323] bg-[#131313] pl-[3px] leading-[16px]">1</div>
      <div className="pl-[4px] leading-[18px]">1</div>
    </div>
    <div className="relative w-[1393px]">
      <svg className="absolute inset-0 h-full w-full">
        <path d="M0 17.500h1393" stroke="#8d8d8d" strokeWidth="1.500" />
        {ticks.map((f) => {
          const x = Math.round((f - 1) * pxPerFrame - 1) + 0.5;
          return <path key={f} d={f % 24 ? `M${x} 13.500v7` : `M${x} 12v10`} stroke={f % 24 ? "#8a8a8a" : "#c8c8c8"} />;
        })}
      </svg>
      <span className="absolute top-[1px] left-[2px] text-[10px] leading-[13px] text-[#a8a8a8]">1</span>
      {ticks.filter((f) => f % 24 === 0).map((f) => (
        <span key={f} className="absolute top-[1px] text-[10px] leading-[13px] text-[#a8a8a8]" style={{ left: (f - 1) * pxPerFrame - 1 }}>{f === 240 ? "2" : f}</span>
      ))}
      <div className="absolute top-[35px] flex h-[9px] w-full justify-between bg-linear-to-b from-[#4c4c4c] to-[#333] text-black">
        <Dots className="border-r border-[#222]" /><Dots /><Dots className="border-l border-[#222]" />
      </div>
      <div className="absolute top-[18px] left-[16px] h-[17px] w-[3px] bg-black" />
      <div className="absolute top-0 left-[7px] h-[19px] w-[21px] border-2 border-white bg-black text-center text-[12px] leading-[14px] text-white">4</div>
    </div>
    <div className="mt-[6px] ml-[3px] w-[41px] font-['Liberation_Mono'] text-[12px] text-[#dedede]">
      <div className="h-[17px] border border-[#232323] bg-[#131313] pl-[1px] leading-[16px]">240</div>
      <div className="pl-[2px] leading-[18px]">240</div>
    </div>
    <div className="mt-[7px] ml-[3px] grid h-[28px] w-[28px] place-items-center border border-black bg-linear-to-b from-[#4d4d4d] to-[#383838]">
      <svg className="h-5 w-5" viewBox="0 0 20 20"><circle cx="6" cy="6" r="4" fill="none" stroke="#dadada" strokeWidth="3" /><path d="m9 9 9 8M14 13l-3 3M17 16l-2 2" stroke="#dadada" strokeWidth="2.600" /></svg>
    </div>
    <div className="mt-[9px] ml-[4px] flex h-[24px] border border-black bg-linear-to-b from-[#4d4d4d] to-[#383838]">
      {[
        <><circle cx="9" cy="9" r="6.700" fill="none" stroke="#d5d5d5" strokeWidth="1.400" /><circle cx="9" cy="9" r="3.900" fill="#222" stroke="#d5d5d5" strokeWidth="1.500" /><path d="M8.500 7v3h3" stroke="#eee" fill="none" /></>,
        <><path d="M4 8c2-6 11-5 12 3" stroke="#ddd" strokeWidth="2.200" fill="none" /><path d="M1 4v6h7zM4 11.500h12" fill="#ddd" stroke="#ddd" strokeWidth="1.200" /><path d="M9 14h7l-3.500 4z" fill="#999" /></>,
        <><path d="M2 7h3l5-5v14l-5-5H2z" fill="#2b343b" stroke="#8f9aa3" strokeWidth="0.800" /><ellipse cx="12" cy="9" rx="3" ry="7" fill="#333" stroke="#bbb" strokeWidth="1.300" /><ellipse cx="12" cy="9" rx="1.200" ry="3" fill="#999" /></>,
        <><path d="M2 2h12v12H2z" fill="#ddd" /><path d="M2 5h12" stroke="#555" /><path d="m9 6 8 7-4 .5-3 3.500z" fill="#fff" stroke="#111" /></>,
      ].map((e, i) => <div key={i} className="grid w-[21.750px] place-items-center border-r border-black last:border-0"><svg className="h-[18px] w-[18px]" viewBox="0 0 18 18">{e}</svg></div>)}
    </div>
  </div>
);

const StatusBar = () => (
  <div className="flex h-[26px] shrink-0 justify-end bg-[#191919] pb-px">
    <div className="flex w-[171px] items-center bg-[#333] text-[#c4c4c4]">
      <svg className="ml-[3px] h-[18px] w-[20px]" viewBox="0 0 20 18"><path d="M1 9c0-6 6-8 10-7 5 1 6 6 4 8-2 1-4 1-5 3-4 2-9 0-9-4z" fill="#b9b9b9" /><path d="m4 5 3 2M9 3l-1 4M12 4l-1 4M3 9h4" stroke="#e5e5e5" /><path d="m15 11 4 3.500-4 3.500z" fill="#888" /></svg>
      <svg className="ml-[9px] h-[15px] w-[16px]" viewBox="0 0 16 15" fill="none" stroke="#626262" strokeWidth="2"><path d="M2 6c1-5 8-6 11-2M14 9c-1 5-8 6-11 2" /><path d="M14 0v5H9M2 15v-5h5" /></svg>
      <div className="ml-[6px] h-full w-[93px] border-l border-[#555] bg-linear-to-b from-[#4d4d4d] to-[#3d3d3d] pl-[3px] text-center text-[11.200px] leading-[23px]">Auto Update</div>
      <div className="grid h-full grow place-items-center bg-[#2c2c2c]"><UpDown className="!h-[13px] !w-[7px]" /></div>
    </div>
    <div className="w-px bg-[#222]" />
  </div>
);

export default function App() {
  return (
    <div className="flex h-[1018px] w-[1920px] flex-col overflow-hidden bg-[#2e2e2e] font-['Noto_Sans_CJK_SC',sans-serif]">
      <Defs />
      <TopBar />
      <Shelves />
      <PaneTabs />
      <PathBar />
      <NetworkMenu />
      <Network />
      <Timeline />
      <StatusBar />
    </div>
  );
}
